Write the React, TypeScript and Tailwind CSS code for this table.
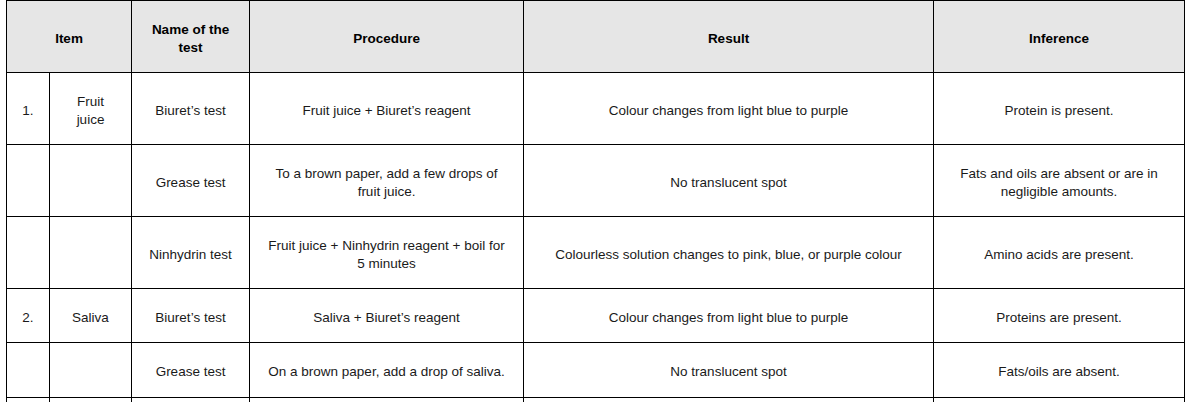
const rows = [
  {
    no: '1.',
    item: 'Fruit juice',
    test: 'Biuret’s test',
    procedure: 'Fruit juice + Biuret’s reagent',
    result: 'Colour changes from light blue to purple',
    inference: 'Protein is present.',
    h: 'h-[72px]',
  },
  {
    no: '',
    item: '',
    test: 'Grease test',
    procedure: 'To a brown paper, add a few drops of fruit juice.',
    result: 'No translucent spot',
    inference: 'Fats and oils are absent or are in negligible amounts.',
    h: 'h-[72px]',
  },
  {
    no: '',
    item: '',
    test: 'Ninhydrin test',
    procedure: 'Fruit juice + Ninhydrin reagent + boil for 5 minutes',
    result: 'Colourless solution changes to pink, blue, or purple colour',
    inference: 'Amino acids are present.',
    h: 'h-[72px]',
  },
  {
    no: '2.',
    item: 'Saliva',
    test: 'Biuret’s test',
    procedure: 'Saliva + Biuret’s reagent',
    result: 'Colour changes from light blue to purple',
    inference: 'Proteins are present.',
    h: 'h-[54px]',
  },
  {
    no: '',
    item: '',
    test: 'Grease test',
    procedure: 'On a brown paper, add a drop of saliva.',
    result: 'No translucent spot',
    inference: 'Fats/oils are absent.',
    h: 'h-[55px]',
  },
  // next row starts just below the fold
  { no: '', item: '', test: '', procedure: '', result: '', inference: '', h: 'h-[72px]' },
]

const cell = 'border border-black px-4 pt-1 text-center align-middle'

export default function App() {
  return (
    <div className="bg-white min-h-screen pl-[6px] font-['Liberation_Sans',Arial,sans-serif] text-[13.5px] leading-[18px] text-[#1a1a1a]">
      <table className="table-fixed border-collapse w-[1178px]">
        <colgroup>
          <col className="w-[43px]" />
          <col className="w-[82px]" />
          <col className="w-[118px]" />
          <col className="w-[274px]" />
          <col className="w-[410px]" />
          <col className="w-[251px]" />
        </colgroup>
        <thead>
          <tr className="bg-[#e6e6e6] font-bold text-black">
            <th colSpan={2} className={`${cell} h-[72px]`}>Item</th>
            <th className={cell}>Name of the test</th>
            <th className={cell}>Procedure</th>
            <th className={cell}>Result</th>
            <th className={cell}>Inference</th>
          </tr>
        </thead>
        <tbody>
          {rows.map((r, i) => (
            <tr key={i} className={r.h}>
              <td className="border border-black pt-1 text-center align-middle">{r.no}</td>
              <td className={`${cell} px-3`}>{r.item}</td>
              <td className={cell}>{r.test}</td>
              <td className={cell}>{r.procedure}</td>
              <td className={cell}>{r.result}</td>
              <td className={cell}>{r.inference}</td>
            </tr>
          ))}
        </tbody>
      </table>
    </div>
  )
}
